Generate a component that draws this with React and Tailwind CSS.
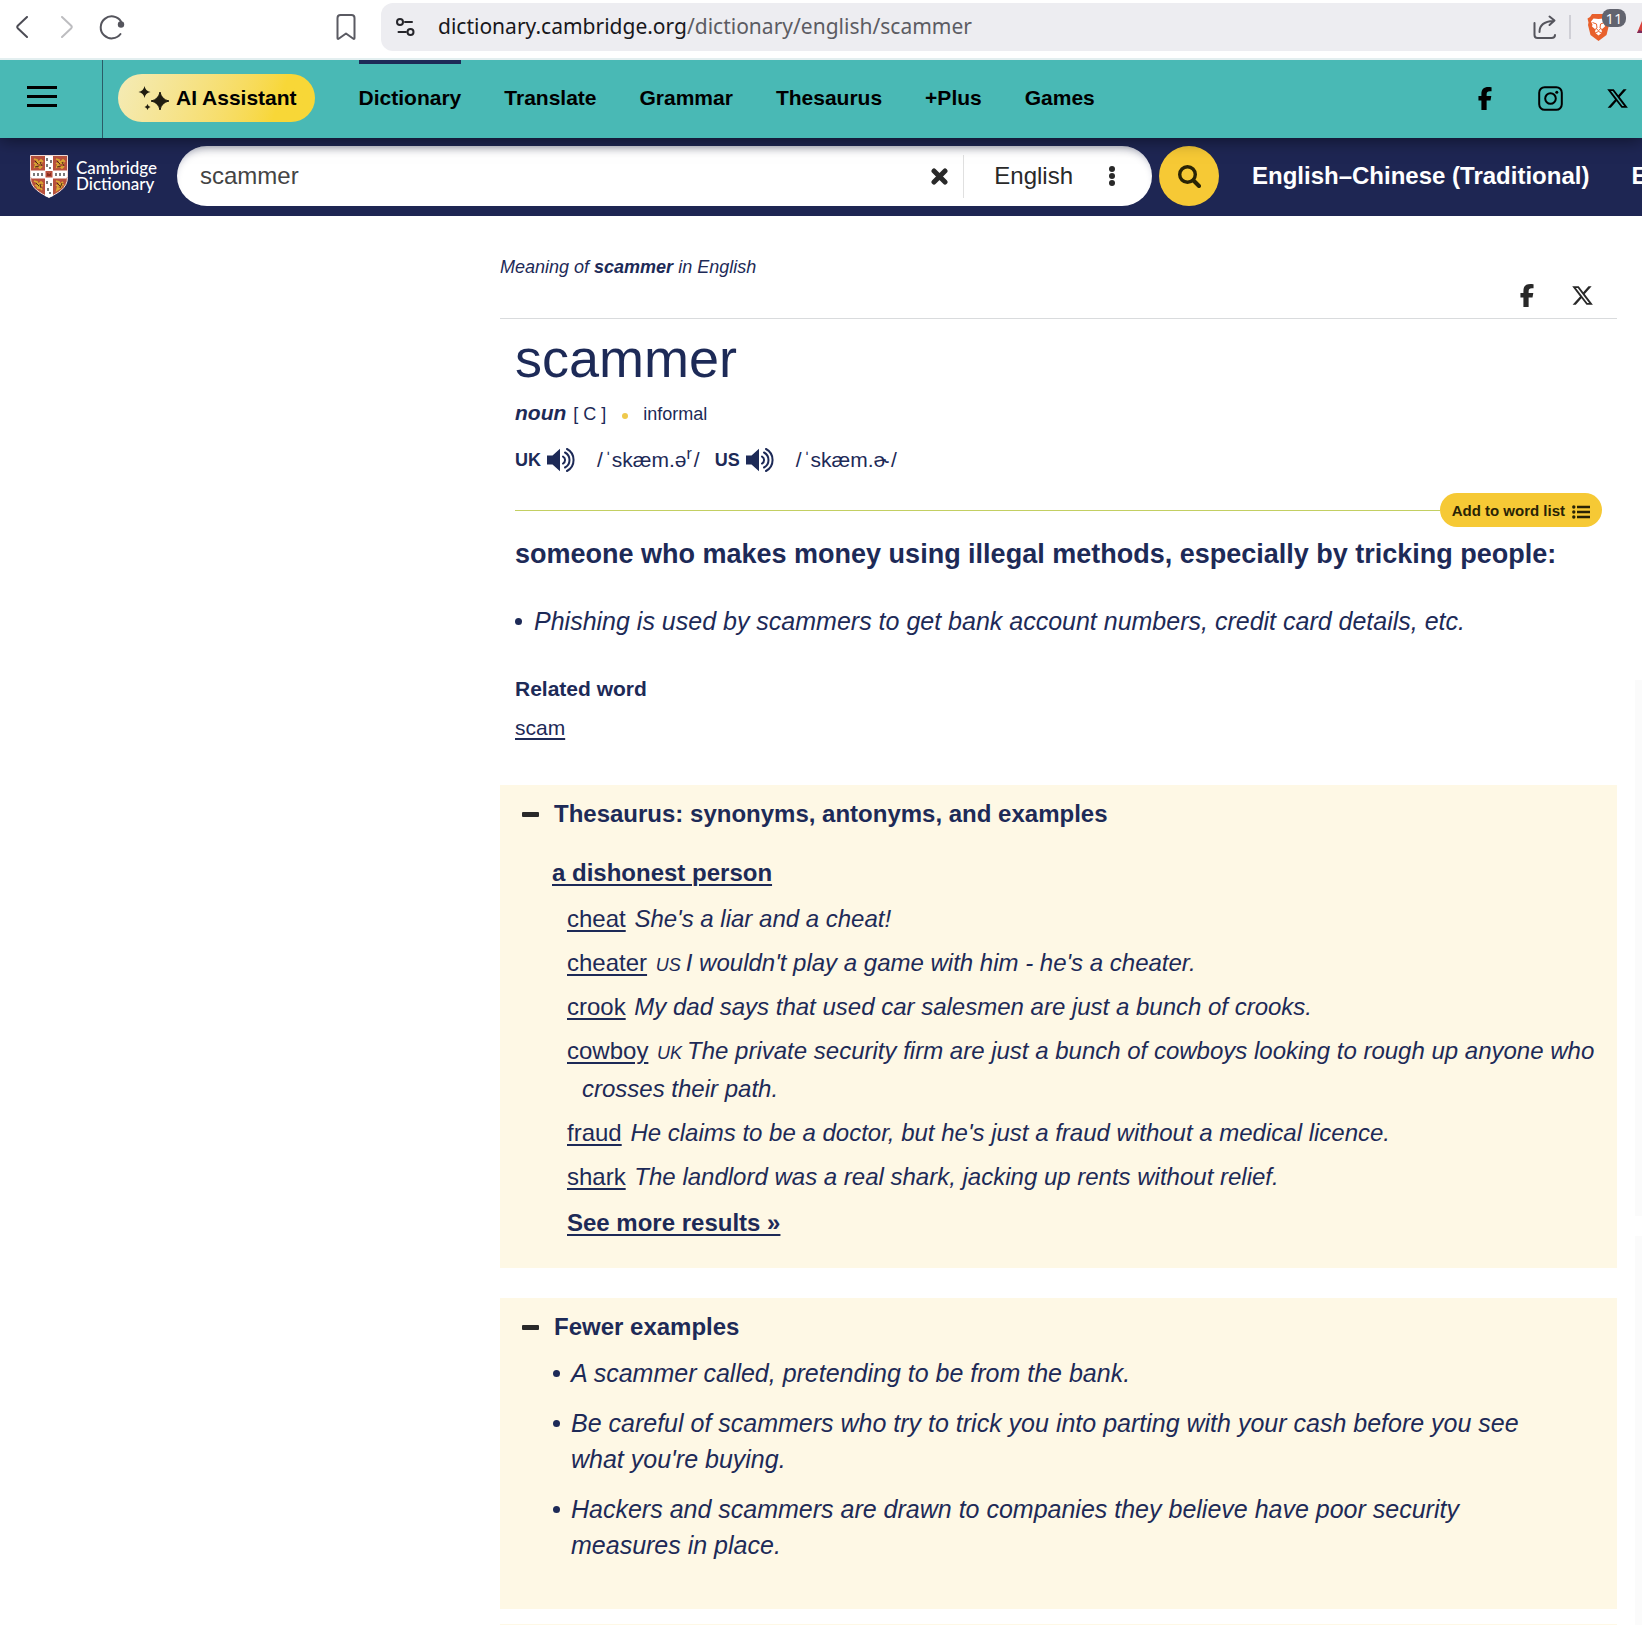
import { FaFacebookF, FaXTwitter } from "react-icons/fa6";

const navLinks = ["Dictionary", "Translate", "Grammar", "Thesaurus", "+Plus", "Games"];

const synonyms = [
  { word: "cheat", text: "She's a liar and a cheat!" },
  { word: "cheater", region: "US", text: "I wouldn't play a game with him - he's a cheater." },
  { word: "crook", text: "My dad says that used car salesmen are just a bunch of crooks." },
  {
    word: "cowboy",
    region: "UK",
    text: "The private security firm are just a bunch of cowboys looking to rough up anyone who crosses their path.",
  },
  { word: "fraud", text: "He claims to be a doctor, but he's just a fraud without a medical licence." },
  { word: "shark", text: "The landlord was a real shark, jacking up rents without relief." },
];

const examples = [
  "A scammer called, pretending to be from the bank.",
  "Be careful of scammers who try to trick you into parting with your cash before you see what you're buying.",
  "Hackers and scammers are drawn to companies they believe have poor security measures in place.",
];

function Shield() {
  return (
    <svg className="w-[38px] h-[43px] shrink-0" viewBox="0 0 38 43" aria-hidden="true">
      <path d="M.5.5h37v22c0 11-10 15.500-18.500 20C10.500 38 .5 33.500.5 22.500z" fill="#b8503c" stroke="#f3dcd6" />
      <path d="M15 1h8v40l-4 1.500-4-1.500z" fill="#fff" />
      <path d="M1 15.500h36v6.500l-.5 1.500h-35L1 22z" fill="#fff" />
      <rect x="15.500" y="16" width="7" height="6.500" fill="#b8503c" />
      <path d="M17 18h1.500v1H20v-1h1v3h-4z" fill="#8a2c20" />
      {/* lions */}
      <g fill="none" stroke="#d9a832" strokeWidth="1.800">
        <path d="M4 4l3 1 1 3 3-3 2 2M4 8l2 1-1 3 3-1 2 2 2-2M9 8l3 1" />
        <path d="M26 4l3 1 1 3 3-3 2 2M26 8l2 1-1 3 3-1 2 2 2-2M31 8l3 1" />
        <path d="M4 26l3 1 1 3 3-3 2 2M5 30l2 1 1 2 2-1 2 3M9 30l4 1" />
        <path d="M26 26l3 1 1 3 3-3M26 30l2 1-1 4 3-2 2-2M31 29l3 1" />
      </g>
      <g fill="none" stroke="#4d2c14" strokeWidth="1">
        <path d="M5 6l3 3M10 7l2 4M5 12l4-1M27 6l3 3M32 7l2 4M27 12l4-1M6 28l3 3M10 29l1 4M27 28l3 3M32 28l-2 5" />
      </g>
      {/* ermine spots */}
      <path
        d="M17 3v3M21 5v3M17 9v3M20 12v2M17 26v3M21 28v3M18 33v3M20 37v2M4 18v3M8 18v3M12 18v3M26 18v3M30 18v3M34 18v3"
        stroke="#222"
        strokeWidth="1.200"
      />
    </svg>
  );
}

function Speaker() {
  return (
    <svg className="w-[29px] h-6" viewBox="0 0 29 24" fill="none" aria-hidden="true">
      <path d="M0 7.500h5.500L13 .8v22.400L5.500 16.500H0z" fill="#1d2a57" />
      <g stroke="#1d2a57" strokeWidth="2" strokeLinecap="round">
        <path d="M16 8.500a4 4 0 0 1 0 7" />
        <path d="M18 4.500a8.500 8.500 0 0 1 0 15" />
        <path d="M20 1a12.500 12.500 0 0 1 0 22" />
      </g>
    </svg>
  );
}

function Minus() {
  return <span className="w-[17px] h-[5px] rounded-[1px] bg-[#292929] shrink-0" />;
}

function BrowserBar() {
  return (
    <div className="relative z-20 flex items-center h-[60px] pt-1 pb-2 border-b-2 border-[#e3eff0] bg-white overflow-hidden">
      <div className="flex items-center w-[381px] shrink-0 pl-4">
        <button aria-label="Back">
          <svg className="w-3 h-[22px]" viewBox="0 0 12 22" fill="none" stroke="#4c4c55" strokeWidth="2" strokeLinecap="round" strokeLinejoin="round">
            <path d="M11 1L2 9.500q-1.500 1.500 0 3L11 21" />
          </svg>
        </button>
        <button aria-label="Forward" className="ml-[33px]">
          <svg className="w-3 h-[22px]" viewBox="0 0 12 22" fill="none" stroke="#bdbdc0" strokeWidth="2" strokeLinecap="round" strokeLinejoin="round">
            <path d="M1 1l9 8.500q1.500 1.500 0 3L1 21" />
          </svg>
        </button>
        <button aria-label="Reload" className="ml-[26px]">
          <svg className="w-[26px] h-[26px]" viewBox="0 0 26 26" fill="none">
            <path d="M22 7.500A11 11 0 1 0 21.500 20" stroke="#55555d" strokeWidth="2" strokeLinecap="round" />
            <circle cx="22" cy="10.500" r="3.200" fill="#55555d" />
          </svg>
        </button>
        <button aria-label="Bookmark" className="ml-auto mr-[25px]">
          <svg className="w-5 h-[26px]" viewBox="0 0 20 26" fill="none" stroke="#5a5a62" strokeWidth="2" strokeLinejoin="round">
            <path d="M1.500 4q0-3 3-3h11q3 0 3 3v20q0 1.500-1.500.5L10 19.500l-7 5q-1.500 1-1.500-.5z" />
          </svg>
        </button>
      </div>
      <div className="flex flex-1 items-center h-12 rounded-l-xl bg-[#ededf1] pl-[15px]">
        <svg className="w-[19px] h-[18px] shrink-0" viewBox="0 0 19 18" fill="none" stroke="#26262b" strokeWidth="2" strokeLinecap="round">
          <circle cx="4" cy="4" r="3" />
          <path d="M9 4h7M2.500 14H10" />
          <circle cx="14.500" cy="14" r="3" />
        </svg>
        <div className="ml-[23px] font-['Noto_Sans'] text-[21px] text-[#5c5c63] whitespace-nowrap">
          <span className="text-[#18181c]">dictionary.cambridge.org</span>/dictionary/english/scammer
        </div>
        <div className="flex items-center ml-auto shrink-0">
          <button aria-label="Share">
            <svg className="w-6 h-6" viewBox="0 0 24 24" fill="none" stroke="#55555d" strokeWidth="2" strokeLinecap="round" strokeLinejoin="round">
              <path d="M1.500 8v12q0 3 3 3h14q3.500 0 3.500-3" />
              <path d="M6.500 17q0-10.500 14-11M16.500 1.500l5 4-5 4.500" />
            </svg>
          </button>
          <span className="w-0.5 h-6 bg-[#cfcfd6] ml-3" />
          <button aria-label="Brave Shields" className="relative ml-4">
            <svg className="w-[23px] h-7" viewBox="0 0 23 28">
              <path d="M5 1h13l2 3 2.500 1.500-1 4L22 12l-2.500 10L11.500 28 3.500 22 1 12l.5-2.500-1-4L3 4z" fill="#e8602c" />
              <path d="M6.500 5.500l5 .5 5-.5 2.500 3-1.500 3 .5 2-3.500 3 .5 3-3.500 3L8 19.500l.5-3-3.500-3 .5-2L4 8.500z" fill="#fff" />
              <path d="M5.500 9.500l4 1.500.5 4-2 1.500M17.500 9.500l-4 1.500-.5 4 2 1.500M9.500 16l2 1.500 2-1.500M8 20l3.500-1.500L15 20" fill="none" stroke="#e8602c" strokeWidth="1" />
            </svg>
            <span className="absolute -top-1 left-[15px] w-6 h-[18px] rounded-lg bg-[#62646f] text-white text-[15px] leading-[18px] text-center font-['Open_Sans']">
              11
            </span>
          </button>
          <svg className="w-[5px] h-3 ml-[27px]" viewBox="0 0 5 12" aria-hidden="true">
            <path d="M5 0v12H0z" fill="#d8423c" />
            <path d="M0 12l2-3 3 1v2z" fill="#7c2a5c" />
          </svg>
        </div>
      </div>
    </div>
  );
}

function TopNav() {
  return (
    <header className="relative z-10 flex h-[78px] bg-[#49b9b5] text-black shadow-[0_2px_16px_rgba(0,0,0,0.5)]">
      <div className="flex items-start w-[103px] shrink-0 pt-[26px] pl-[27px] border-r border-[#2b5c68]">
        <button aria-label="Menu" className="flex flex-col gap-1.5">
          <span className="w-[30px] h-[3px] bg-black" />
          <span className="w-[30px] h-[3px] bg-black" />
          <span className="w-[30px] h-[3px] bg-black" />
        </button>
      </div>
      <button className="flex items-center mt-[14px] ml-[15px] h-12 pl-5 pr-[18px] rounded-full bg-linear-110 from-[#f4ebb6] to-[#f8d737] to-80% text-[21px] font-bold whitespace-nowrap">
        <svg className="w-[31px] h-6 mr-[7px]" viewBox="0 0 31 24" fill="#201d10" aria-hidden="true">
          <path d="M22 6q1.500 7.500 9 9-7.500 1.500-9 9-1.500-7.500-9-9 7.500-1.500 9-9z" stroke="#201d10" strokeLinejoin="round" />
          <path d="M6.500 0q.8 5 6 6-5.200 1-6 6-.8-5-6-6 5.200-1 6-6z" />
          <path d="M9.500 18q.6 2.500 3 3-2.400.5-3 3-.6-2.500-3-3 2.400-.5 3-3z" />
        </svg>
        AI Assistant
      </button>
      <nav className="flex ml-11 gap-[43px] text-[21px] font-bold">
        {navLinks.map((link, i) => (
          <a
            key={link}
            href="#"
            className={
              i === 0
                ? "border-t-4 border-[#1d2a57] leading-[68px] whitespace-nowrap"
                : "border-t-4 border-transparent leading-[68px] whitespace-nowrap"
            }
          >
            {link}
          </a>
        ))}
      </nav>
      <div className="flex items-center ml-auto pb-0.5 pr-[13px]">
        <a href="#" aria-label="Facebook">
          <FaFacebookF className="w-4 h-[23px]" />
        </a>
        <a href="#" aria-label="Instagram" className="ml-[45px]">
          <svg className="w-[25px] h-[25px]" viewBox="0 0 25 25" fill="none" stroke="#000" strokeWidth="2">
            <rect x="1.200" y="1.200" width="22.600" height="22.600" rx="5.500" />
            <circle cx="12.500" cy="12.500" r="5.300" />
            <circle cx="18.800" cy="6.200" r="1.500" fill="#000" stroke="none" />
          </svg>
        </a>
        <a href="#" aria-label="X" className="ml-[43px]">
          <FaXTwitter className="w-[23px] h-[23px]" />
        </a>
      </div>
    </header>
  );
}

function SearchBar() {
  return (
    <div className="flex items-center h-[78px] pb-0.5 bg-[#1e2653] text-white overflow-hidden">
      <a href="#" className="flex items-center w-[177px] shrink-0 pl-[30px]">
        <Shield />
        <span className="ml-2 font-['Lato'] font-medium text-[17px] leading-4">
          Cambridge
          <br />
          Dictionary
        </span>
      </a>
      <form className="flex items-center flex-1 min-w-0" onSubmit={(e) => e.preventDefault()}>
        <div className="flex items-center w-[975px] shrink-0 h-[60px] rounded-full bg-white text-[24px] text-[#292929] shadow-[inset_0_6px_8px_-5px_rgba(30,38,83,0.4)]">
          <input
            type="text"
            aria-label="Search English"
            defaultValue="scammer"
            className="flex-1 min-w-0 pl-[23px] h-full bg-transparent text-[#444] outline-none"
          />
          <button type="button" aria-label="Clear">
            <svg className="w-[17px] h-[17px]" viewBox="0 0 17 17" stroke="#292929" strokeWidth="5" strokeLinecap="round">
              <path d="M3 3l11 11M14 3L3 14" />
            </svg>
          </button>
          <button type="button" className="flex items-center h-[43px] ml-[15px] pl-[30px] pr-9 border-l border-[#e0e0e0]">
            English
            <svg className="w-2 h-5 ml-[35px]" viewBox="0 0 8 20" fill="#292929" aria-hidden="true">
              <circle cx="4" cy="3" r="3" />
              <circle cx="4" cy="10" r="3" />
              <circle cx="4" cy="17" r="3" />
            </svg>
          </button>
        </div>
        <button aria-label="Search" className="flex items-center justify-center w-[60px] h-[60px] shrink-0 ml-[7px] rounded-full bg-[#f6c935]">
          <svg className="w-[23px] h-[23px]" viewBox="0 0 23 23" fill="none" stroke="#292305">
            <circle cx="9.500" cy="9.500" r="7.800" strokeWidth="3.400" />
            <path d="M15.500 15.500l5.500 5.500" strokeWidth="4" strokeLinecap="round" />
          </svg>
        </button>
        <div className="flex gap-[42px] ml-[33px] text-[24px] font-bold whitespace-nowrap">
          <a href="#">English–Chinese (Traditional)</a>
          <a href="#">English</a>
        </div>
      </form>
    </div>
  );
}

function Entry() {
  return (
    <div className="px-[15px]">
      <h1 className="mt-[7px] text-[54px] leading-[64px]">scammer</h1>
      <div className="flex items-baseline mt-2 text-[18px] leading-[30px]">
        <span className="text-[21px] font-bold italic">noun</span>
        <span className="ml-[7px]">[ C ]</span>
        <span className="self-center w-1.5 h-1.5 ml-4 mt-1 rounded-full bg-[#efc94c]" />
        <span className="ml-[15px]">informal</span>
      </div>
      <div className="flex items-center mt-4 text-[21px] leading-[30px]">
        <span className="text-[18px] font-bold">UK</span>
        <button aria-label="Listen to the UK pronunciation" className="ml-1.5">
          <Speaker />
        </button>
        <span className="ml-[21px]">
          /<span className="px-0.5">ˈskæm.ə<sup className="text-[16px]">r</sup></span>/
        </span>
        <span className="ml-[15px] text-[18px] font-bold">US</span>
        <button aria-label="Listen to the US pronunciation" className="ml-1.5">
          <Speaker />
        </button>
        <span className="ml-[21px]">
          /<span className="px-0.5">ˈskæm.ɚ</span>/
        </span>
      </div>

      <div className="flex items-center mt-[18px]">
        <span className="flex-1 h-px bg-[#c3cf62]" />
        <button className="flex items-center h-[34px] pt-[3px] px-3 rounded-full bg-[#f6c935] text-[15px] font-bold text-[#292305]">
          Add to word list
          <svg className="w-[18px] h-[14px] ml-[7px]" viewBox="0 0 18 14" fill="#292305" aria-hidden="true">
            <circle cx="1.800" cy="2" r="1.700" />
            <circle cx="1.800" cy="7" r="1.700" />
            <circle cx="1.800" cy="12" r="1.700" />
            <path d="M5 .8h13v2.400H5zM5 5.800h13v2.400H5zM5 10.800h13v2.400H5z" />
          </svg>
        </button>
      </div>

      <h2 className="mt-[9px] text-[27px] leading-9 font-bold">
        someone who makes money using illegal methods, especially by tricking people:
      </h2>
      <div className="flex items-center mt-[31px] text-[25px] leading-9 italic">
        <span className="w-[7px] h-[7px] mr-3 rounded-full bg-[#1d2a57]" />
        Phishing is used by scammers to get bank account numbers, credit card details, etc.
      </div>
      <h3 className="mt-[35px] text-[21px] leading-[30px] font-bold">Related word</h3>
      <div className="mt-[9px] text-[21px] leading-[30px]">
        <a href="#" className="underline decoration-2 underline-offset-3">scam</a>
      </div>
    </div>
  );
}

export default function App() {
  return (
    <div className="bg-white font-['Liberation_Sans',Arial,sans-serif] text-[#1d2a57] overflow-hidden">
      <BrowserBar />
      <TopNav />
      <SearchBar />

      <div className="flex">
        <div className="w-[500px] shrink-0" />
        <main className="flex-1 min-w-0 pt-[39px]">
          <p className="text-[18px] leading-6 italic">
            Meaning of <b>scammer</b> in English
          </p>
          <div className="flex items-center justify-end h-10 pb-1.5 pr-[23px] gap-[36px] border-b border-[#d9dbdd] text-[#292929]">
            <a href="#" aria-label="Share on Facebook">
              <FaFacebookF className="w-4 h-[23px]" />
            </a>
            <a href="#" aria-label="Share on X">
              <FaXTwitter className="w-[23px] h-[23px]" />
            </a>
          </div>

          <Entry />

          {/* Thesaurus */}
          <section className="mt-[42px] pt-[13px] pb-[26px] pl-[22px] pr-[15px] bg-[#fef8e5]">
            <button className="flex items-center gap-[15px] text-[24px] leading-8 font-bold">
              <Minus />
              Thesaurus: synonyms, antonyms, and examples
            </button>
            <div className="mt-6 ml-[30px] text-[24px] leading-[38px]">
              <a href="#" className="font-bold underline decoration-2 underline-offset-3">
                a dishonest person
              </a>
              <ul className="flex flex-col gap-1.5 mt-2 ml-[15px]">
                {synonyms.map((item) => (
                  <li key={item.word} className="pl-[15px] -indent-[15px]">
                    <a href="#" className="mr-0.5 underline decoration-2 underline-offset-3">{item.word}</a>{" "}
                    <i>
                      {item.region && <span className="text-[18px] leading-none">{item.region} </span>}
                      {item.text}
                    </i>
                  </li>
                ))}
              </ul>
              <div className="mt-2 ml-[15px]">
                <a href="#" className="font-bold underline decoration-2 underline-offset-3">
                  See more results »
                </a>
              </div>
            </div>
          </section>

          {/* Examples */}
          <section className="mt-[30px] pt-[13px] pb-[46px] pl-[22px] pr-[60px] bg-[#fef8e5]">
            <button className="flex items-center gap-[15px] text-[24px] leading-8 font-bold">
              <Minus />
              Fewer examples
            </button>
            <ul className="flex flex-col gap-[14px] mt-3 ml-[31px] text-[25px] leading-9 italic">
              {examples.map((text) => (
                <li key={text} className="flex">
                  <span className="w-[7px] h-[7px] mt-[15px] mr-[11px] rounded-full bg-[#1d2a57] shrink-0" />
                  {text}
                </li>
              ))}
            </ul>
          </section>

          <section className="mt-[15px] h-0.5 bg-[#fef8e5]" />
        </main>
        <aside className="flex flex-col w-[25px] shrink-0 pt-[464px] pl-[18px]">
          <div className="h-[536px] bg-[#fbfbfb]" />
          <div className="flex-1 mt-5 bg-[#fbfbfb]" />
        </aside>
      </div>
    </div>
  );
}
